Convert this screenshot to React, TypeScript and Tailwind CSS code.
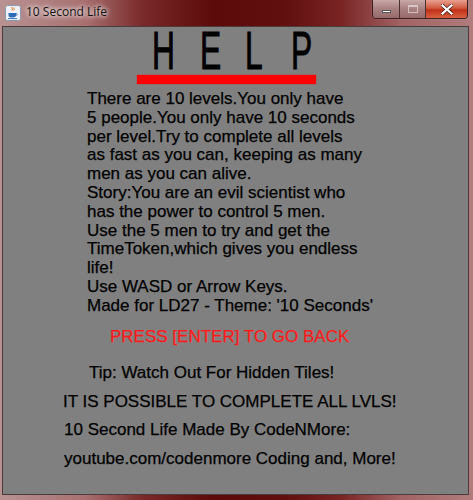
import React from "react";

function JavaIcon() {
  return (
    <svg width="16" height="16" viewBox="0 0 16 16">
      <rect x="0.5" y="0.5" width="15" height="15" rx="2" fill="#eef2f8" stroke="#8a9ab0" />
      <path d="M7 2c-1 1.2 1.5 2-0.2 3.6M9 2.5c-0.8 1 1 1.6-0.3 2.8" stroke="#e06a10" strokeWidth="1" fill="none" />
      <path d="M3.5 8h7.5v2.2c0 1.4-1.4 2.3-3.7 2.3s-3.8-0.9-3.8-2.3z" fill="#2a6ab8" />
      <path d="M11 8.4c1.6 0 1.6 2-0.3 2.2" stroke="#2a6ab8" strokeWidth="0.9" fill="none" />
      <path d="M3 13.6h9" stroke="#2a6ab8" strokeWidth="0.9" />
    </svg>
  );
}

const letters = [
  { ch: "H", left: "ml-[149px]" },
  { ch: "E", left: "ml-[30px]" },
  { ch: "L", left: "ml-[27px]" },
  { ch: "P", left: "ml-[28px]" },
];

export default function App() {
  const body = [
    "There are 10 levels.You only have",
    "5 people.You only have 10 seconds",
    "per level.Try to complete all levels",
    "as fast as you can, keeping as many",
    "men as you can alive.",
    "Story:You are an evil scientist who",
    "has the power to control 5 men.",
    "Use the 5 men to try and get the",
    "TimeToken,which gives you endless",
    "life!",
    "Use WASD or Arrow Keys.",
    "Made for LD27 - Theme: '10 Seconds'",
  ];
  return (
    <div className="w-[473px] h-[500px] flex flex-col overflow-hidden bg-[linear-gradient(90deg,#b89292_0%,#a87070_18%,#7a2a2a_30%,#5c0a0a_45%,#600e0e_60%,#7a2424_72%,#a26464_85%,#b07c7c_100%)]">
      {/* Title bar */}
      <div className="h-[26px] flex items-start relative shrink-0">
        <div className="mt-[5px] ml-[5px]">
          <JavaIcon />
        </div>
        <div
          className="ml-[5px] mt-[4px] text-[12px] leading-[16px] text-[#111] [text-shadow:0_0_6px_#ffffff,0_0_4px_#ffffff]"
          style={{ fontFamily: '"Open Sans", "Noto Sans", sans-serif' }}
        >
          10 Second Life
        </div>
        <div className="ml-auto mr-[5px] flex h-[19px] rounded-b-[4px] border border-t-0 border-[#3a2020] overflow-hidden shadow-[0_0_1px_#ffffff80]">
          <div className="w-[27px] h-full flex items-end justify-center pb-[5px] bg-[linear-gradient(180deg,#c8a8a8_0%,#a88080_50%,#986a6a_100%)] border-r border-[#4a3030]">
            <div className="w-[9px] h-[3px] bg-white border border-[#555]" />
          </div>
          <div className="w-[26px] h-full flex items-center justify-center bg-[linear-gradient(180deg,#c8a8a8_0%,#a88080_50%,#986a6a_100%)] border-r border-[#4a3030]">
            <div className="w-[10px] h-[8px] border border-[#e8dcdc] border-t-2 opacity-70" />
          </div>
          <div className="w-[41px] h-full flex items-center justify-center bg-[linear-gradient(180deg,#e8a090_0%,#d05a40_45%,#c03018_55%,#d86040_100%)]">
            <svg width="12" height="11" viewBox="0 0 12 11">
              <path d="M1.5 1.5l9 8M10.5 1.5l-9 8" stroke="#3a1a1a" strokeWidth="3.6" strokeLinecap="square" />
              <path d="M1.5 1.5l9 8M10.5 1.5l-9 8" stroke="#ffffff" strokeWidth="2.2" strokeLinecap="square" />
            </svg>
          </div>
        </div>
      </div>
      {/* Content */}
      <div className="flex-1 flex pl-[2px] pr-[4px] pb-[5px]">
        <div
          className="flex-1 bg-[#808080] border border-[#4a3c3c] text-black [-webkit-text-stroke:0.25px_currentColor]"
          style={{ fontFamily: '"Liberation Sans", Arial, sans-serif' }}
        >
          <div className="h-[48px] flex text-[53px] leading-[48px]">
            {letters.map((l) => (
              <div key={l.ch} className={`${l.left} w-[18px] overflow-visible whitespace-nowrap`}>
                <span className="inline-block origin-left scale-x-[0.6] [-webkit-text-stroke:1px_black]">{l.ch}</span>
              </div>
            ))}
          </div>
          <div className="ml-[134px] w-[179px] h-[9px] bg-[#ff0000] shadow-[0_0_1px_#ff0000]" />
          <div className="mt-[6px] ml-[84px] text-[17px] leading-[18.8px]">
            {body.map((t) => (
              <div key={t} className="whitespace-pre">{t}</div>
            ))}
          </div>
          <div className="mt-[12px] ml-[107px] text-[17px] leading-[18.8px] text-[#ff1a1a]">
            PRESS [ENTER] TO GO BACK
          </div>
          <div className="mt-[13px] text-[17px] leading-[28.5px]">
            <div className="ml-[86px]">Tip: Watch Out For Hidden Tiles!</div>
            <div className="ml-[60px]">IT IS POSSIBLE TO COMPLETE ALL LVLS!</div>
            <div className="ml-[61px]">10 Second Life Made By CodeNMore:</div>
            <div className="ml-[61px]">youtube.com/codenmore Coding and, More!</div>
          </div>
        </div>
      </div>
    </div>
  );
}
